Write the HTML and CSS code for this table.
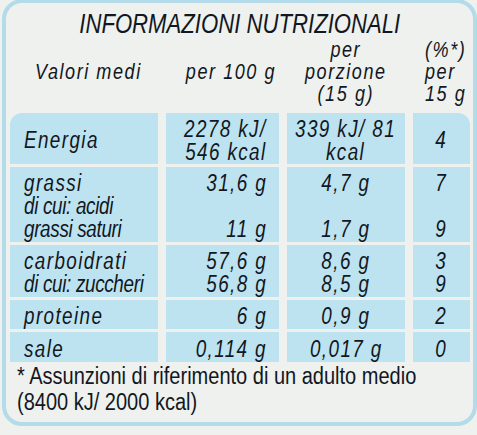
FILE: index.html
```html
<!DOCTYPE html>
<html lang="it">
<head>
    <meta charset="UTF-8">
    <meta name="viewport" content="width=device-width, initial-scale=1.0">
    <title>Informazioni nutrizionali</title>
    <link rel="stylesheet" href="styles.css">
</head>
<body>
    <div class="label">
        <h1 class="title"><span class="t">INFORMAZIONI NUTRIZIONALI</span></h1>

        <div class="head">
            <div class="h-name"><span class="t">Valori medi</span></div>
            <div class="h-100"><span class="t">per 100 g</span></div>
            <div class="h-portion"><span class="t">per<br>porzione<br>(15 g)</span></div>
            <div class="h-ri"><span class="t">(%*)<br>per<br>15 g</span></div>
        </div>

        <div class="table">
            <div class="cell name corner-left"><span class="t">Energia</span></div>
            <div class="cell num"><span class="t">2278 kJ/<br>546 kcal</span></div>
            <div class="cell mid"><span class="t">339 kJ/ 81<br>kcal</span></div>
            <div class="cell ri corner-right"><span class="t">4</span></div>

            <div class="cell name"><span class="t">grassi<br><span class="sub">di cui: acidi<br>grassi saturi</span></span></div>
            <div class="cell num"><span class="t">31,6 g<br>&nbsp;<br>11 g</span></div>
            <div class="cell mid"><span class="t">4,7 g<br>&nbsp;<br>1,7 g</span></div>
            <div class="cell ri"><span class="t">7<br>&nbsp;<br>9</span></div>

            <div class="cell name"><span class="t">carboidrati<br><span class="sub">di cui: zuccheri</span></span></div>
            <div class="cell num"><span class="t">57,6 g<br>56,8 g</span></div>
            <div class="cell mid"><span class="t">8,6 g<br>8,5 g</span></div>
            <div class="cell ri"><span class="t">3<br>9</span></div>

            <div class="cell name"><span class="t">proteine</span></div>
            <div class="cell num"><span class="t">6 g</span></div>
            <div class="cell mid"><span class="t">0,9 g</span></div>
            <div class="cell ri"><span class="t">2</span></div>

            <div class="cell name"><span class="t">sale</span></div>
            <div class="cell num"><span class="t">0,114 g</span></div>
            <div class="cell mid"><span class="t">0,017 g</span></div>
            <div class="cell ri"><span class="t">0</span></div>
        </div>

        <p class="note"><span class="t">* Assunzioni di riferimento di un adulto medio<br>(8400 kJ/ 2000 kcal)</span></p>
    </div>
</body>
</html>
```

FILE: styles.css
```css
body {
    margin: 0;
    background-color: #eef1ee;
    color: #121722;
    font-family: "Liberation Sans", Arial, sans-serif;
}
.label {
    box-sizing: border-box;
    width: 475px;
    height: 427px;
    margin: -1px 0 0 2px;
    padding: 6px 3px 0 4px;
    border: 4px solid #b3dbea;
    border-radius: 20px;
}
/* condensed look: Arial widths squeezed like a narrow face */
.t {
    display: inline-block;
    white-space: nowrap;
    transform: scaleX(0.82);
}
.title {
    margin: 0;
    font-size: 27px;
    font-weight: normal;
    font-style: italic;
    line-height: 30px;
    text-align: center;
}
.title .t {
    transform-origin: center;
}
.head,
.table {
    display: grid;
    grid-template-columns: 148px 113px 118px 57px;
    column-gap: 8px;
}
.head {
    margin-bottom: 8px;
    font-size: 22px;
    font-style: italic;
    line-height: 22px;
    letter-spacing: 1.9px;
    align-items: end;
}
.h-name {
    padding: 0 0 22px 25px;
}
.h-name .t {
    transform-origin: left;
}
.h-100 {
    padding: 0 6px 22px 0;
    text-align: right;
}
.h-100 .t {
    transform-origin: right;
}
.h-portion {
    text-align: center;
}
.h-ri {
    padding-left: 12px;
}
.h-ri .t {
    transform-origin: left;
}
.table {
    row-gap: 3px;
    grid-template-rows: 51px 75px 52px 29px 30px;
    font-size: 23px;
    font-style: italic;
    line-height: 23px;
    letter-spacing: 1.7px;
}
.cell {
    display: flex;
    flex-direction: column;
    justify-content: center;
    padding-top: 4px;
    box-sizing: border-box;
    background-color: #bde3f1;
}
.name {
    align-items: flex-start;
    padding-left: 14px;
}
.name .t {
    transform-origin: left;
}
.sub {
    letter-spacing: -0.4px;
}
.num {
    align-items: flex-end;
    text-align: right;
    padding-right: 12px;
}
.num .t {
    transform-origin: right;
}
.mid,
.ri {
    align-items: center;
    text-align: center;
}
.corner-left {
    border-top-left-radius: 12px;
}
.corner-right {
    border-top-right-radius: 12px;
}
.note {
    margin: 1px 0 0 7px;
    font-size: 23px;
    line-height: 26px;
}
.note .t {
    transform: scaleX(0.87);
    transform-origin: left;
}
```
